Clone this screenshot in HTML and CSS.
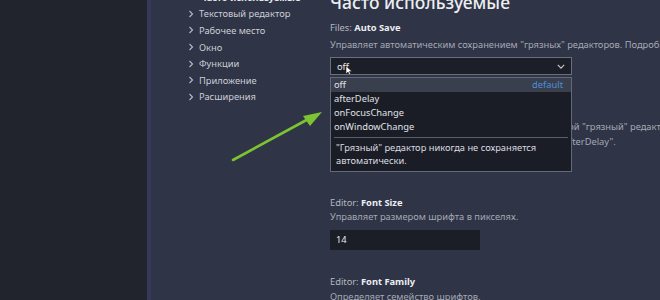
FILE: index.html
```html
<!DOCTYPE html>
<html lang="ru">
<head>
<meta charset="utf-8">
<link rel="stylesheet" href="styles.css">
</head>
<body>
<div class="app">
  <div class="left-pane"></div>
  <div class="settings">
    <nav class="tree">
      <div class="tree-item tree-current">Часто используемые</div>
      <div class="tree-item"><svg class="chev" viewBox="0 0 8 8"><polyline points="2.5,1 5.5,4 2.5,7"/></svg>Текстовый редактор</div>
      <div class="tree-item"><svg class="chev" viewBox="0 0 8 8"><polyline points="2.5,1 5.5,4 2.5,7"/></svg>Рабочее место</div>
      <div class="tree-item"><svg class="chev" viewBox="0 0 8 8"><polyline points="2.5,1 5.5,4 2.5,7"/></svg>Окно</div>
      <div class="tree-item"><svg class="chev" viewBox="0 0 8 8"><polyline points="2.5,1 5.5,4 2.5,7"/></svg>Функции</div>
      <div class="tree-item"><svg class="chev" viewBox="0 0 8 8"><polyline points="2.5,1 5.5,4 2.5,7"/></svg>Приложение</div>
      <div class="tree-item"><svg class="chev" viewBox="0 0 8 8"><polyline points="2.5,1 5.5,4 2.5,7"/></svg>Расширения</div>
    </nav>
    <main class="content">
      <h1 class="group-title">Часто используемые</h1>

      <section class="setting">
        <div class="setting-title"><span class="cat">Files: </span><b>Auto Save</b></div>
        <div class="setting-desc">Управляет автоматическим сохранением "грязных" редакторов. Подробнее об автоматическом сохранении</div>
        <div class="select-wrap">
          <div class="select">
            <span>off</span>
            <svg class="select-chev" viewBox="0 0 10 6"><polyline points="1,1 5,5 9,1"/></svg>
          </div>
          <svg class="cursor" viewBox="0 0 8 11"><path d="M1 1 L1 9 L3 7 L4.5 10 L5.8 9.4 L4.4 6.5 L7 6.5 Z"/></svg>
          <div class="dropdown">
            <div class="option option-active"><span>off</span><span class="default">default</span></div>
            <div class="option">afterDelay</div>
            <div class="option">onFocusChange</div>
            <div class="option">onWindowChange</div>
            <div class="option-desc">"Грязный" редактор никогда не сохраняется автоматически.</div>
          </div>
        </div>
      </section>

      <section class="setting setting-delay">
        <div class="setting-title"><span class="cat">Files: </span><b>Auto Save Delay</b></div>
        <div class="setting-desc setting-desc-long">
          <div>Управляет задержкой в миллисекундах, после которой "грязный" редактор сохраняется автоматически.</div>
          <div>Применяется, только когда установлено значение "afterDelay".</div>
        </div>
        <div class="input">1000</div>
      </section>

      <section class="setting setting-size">
        <div class="setting-title"><span class="cat">Editor: </span><b>Font Size</b></div>
        <div class="setting-desc">Управляет размером шрифта в пикселях.</div>
        <div class="input">14</div>
      </section>

      <section class="setting setting-last">
        <div class="setting-title"><span class="cat">Editor: </span><b>Font Family</b></div>
        <div class="setting-desc">Определяет семейство шрифтов.</div>
      </section>
    </main>
  </div>
  <svg class="arrow" viewBox="0 0 100 60" width="100" height="60">
    <line x1="3" y1="55" x2="82" y2="12"/>
    <polygon points="92,7 73,11 80,21"/>
  </svg>
</div>
</body>
</html>
```

FILE: styles.css
```css
* { box-sizing: border-box; }
html, body {
  margin: 0;
  padding: 0;
  width: 660px;
  height: 300px;
  overflow: hidden;
  background: #22252d;
  font-family: "Noto Sans", "Liberation Sans", sans-serif;
}
.app {
  position: relative;
  display: flex;
  width: 660px;
  height: 300px;
}
.left-pane {
  width: 147px;
  flex: none;
  background: #21242c;
}
.settings {
  flex: 1;
  display: flex;
  background: #2f3446;
  border-left: 4px solid #343859;
  overflow: hidden;
}
.tree {
  width: 179px;
  flex: none;
  padding-left: 36px;
  margin-top: -11px;
}
.tree-item {
  display: flex;
  align-items: center;
  height: 16.6px;
  font-size: 9.3px;
  color: #ccced6;
  white-space: nowrap;
}
.tree-current {
  font-weight: bold;
  color: #e4e5ea;
  padding-left: 13px;
}
.chev {
  width: 8px;
  height: 8px;
  margin-right: 4px;
  fill: none;
  stroke: #b9bcc5;
  stroke-width: 1.1;
}
.content {
  flex: 1;
  min-width: 0;
  white-space: nowrap;
}
.group-title {
  margin: -10px 0 0;
  font-size: 17.5px;
  line-height: 24px;
  font-weight: 500;
  color: #eceef2;
}
.setting { margin-top: 24px; }
.group-title + .setting { margin-top: 7px; }
.setting-title {
  font-size: 9.3px;
  line-height: 14px;
  color: #eceef2;
}
.setting-title .cat { color: #b6b9c2; }
.setting-desc {
  margin-top: 3px;
  font-size: 9.3px;
  line-height: 14px;
  color: #a5a9b4;
}
.setting-delay { margin-top: 26px; }
.setting-desc-long { margin-top: 4px; line-height: 15px; }
.setting-delay .input { margin-top: 0; }
.setting-size { margin-top: 27px; }
.setting-size .setting-desc { margin-top: 0; }
.select-wrap {
  position: relative;
  width: 242px;
  margin-top: 5px;
}
.select {
  display: flex;
  align-items: center;
  justify-content: space-between;
  height: 18px;
  padding: 0 6px;
  background: #1c1f28;
  border: 1px solid #6a6f7e;
  font-size: 9.3px;
  color: #e8e9ee;
}
.select-chev {
  width: 8px;
  height: 5px;
  fill: none;
  stroke: #c9cbd2;
  stroke-width: 1.4;
}
.cursor {
  position: absolute;
  left: 15px;
  top: 8px;
  width: 8px;
  height: 11px;
  fill: #ffffff;
  stroke: #222;
  stroke-width: 0.6;
  z-index: 3;
}
.dropdown {
  position: absolute;
  top: 20px;
  left: 0;
  width: 242px;
  background: #1a1d25;
  border: 1px solid #646979;
  z-index: 2;
}
.option {
  display: flex;
  justify-content: space-between;
  height: 14px;
  line-height: 14px;
  padding: 0 8px 0 3px;
  font-size: 9.3px;
  color: #e0e2e8;
}
.option-active { background: #3a3f4d; }
.default { color: #4a8fdc; }
.option-desc {
  margin: 3px 3px 0;
  border-top: 1px solid #5a5f6c;
  padding: 3px 2px 4px;
  font-size: 9.3px;
  line-height: 13px;
  color: #dadce2;
  white-space: normal;
}
.input {
  width: 150px;
  height: 20px;
  margin-top: 6px;
  padding: 0 6px;
  background: #1b1e26;
  font-size: 9.3px;
  line-height: 20px;
  color: #e8e9ee;
}
.setting-last { margin-top: 25px; }
.setting-last .setting-desc { margin-top: 1px; }
.arrow {
  position: absolute;
  left: 230px;
  top: 105px;
  overflow: visible;
}
.arrow line {
  stroke: #7cc431;
  stroke-width: 2.6;
  stroke-linecap: round;
}
.arrow polygon { fill: #7cc431; }
```
